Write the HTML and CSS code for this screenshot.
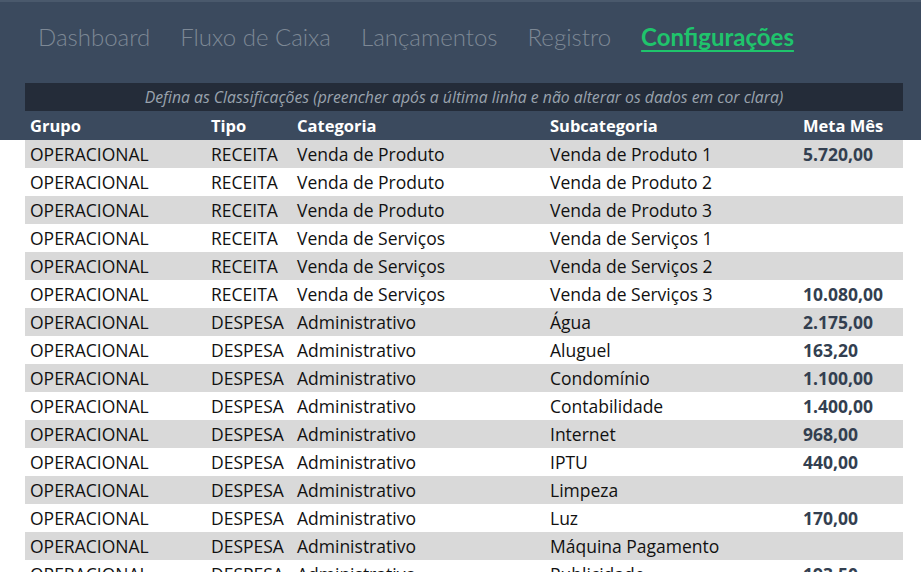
FILE: index.html
```html
<!DOCTYPE html>
<html lang="pt-BR">
<head>
<meta charset="utf-8">
<title>Configurações</title>
<link rel="stylesheet" href="styles.css">
</head>
<body>
<div class="page">
  <header class="top">
    <nav class="nav">
      <a class="nav-item">Dashboard</a>
      <a class="nav-item">Fluxo de Caixa</a>
      <a class="nav-item">Lançamentos</a>
      <a class="nav-item">Registro</a>
      <a class="nav-item active">Configurações</a>
    </nav>
    <div class="banner">Defina as Classificações (preencher após a última linha e não alterar os dados em cor clara)</div>
    <div class="row head">
      <div>Grupo</div><div>Tipo</div><div>Categoria</div><div>Subcategoria</div><div>Meta Mês</div>
    </div>
  </header>
  <main class="table">
    <div class="row odd"><div>OPERACIONAL</div><div>RECEITA</div><div>Venda de Produto</div><div>Venda de Produto 1</div><div class="meta">5.720,00</div></div>
    <div class="row"><div>OPERACIONAL</div><div>RECEITA</div><div>Venda de Produto</div><div>Venda de Produto 2</div><div class="meta"></div></div>
    <div class="row odd"><div>OPERACIONAL</div><div>RECEITA</div><div>Venda de Produto</div><div>Venda de Produto 3</div><div class="meta"></div></div>
    <div class="row"><div>OPERACIONAL</div><div>RECEITA</div><div>Venda de Serviços</div><div>Venda de Serviços 1</div><div class="meta"></div></div>
    <div class="row odd"><div>OPERACIONAL</div><div>RECEITA</div><div>Venda de Serviços</div><div>Venda de Serviços 2</div><div class="meta"></div></div>
    <div class="row"><div>OPERACIONAL</div><div>RECEITA</div><div>Venda de Serviços</div><div>Venda de Serviços 3</div><div class="meta">10.080,00</div></div>
    <div class="row odd"><div>OPERACIONAL</div><div>DESPESA</div><div>Administrativo</div><div>Água</div><div class="meta">2.175,00</div></div>
    <div class="row"><div>OPERACIONAL</div><div>DESPESA</div><div>Administrativo</div><div>Aluguel</div><div class="meta">163,20</div></div>
    <div class="row odd"><div>OPERACIONAL</div><div>DESPESA</div><div>Administrativo</div><div>Condomínio</div><div class="meta">1.100,00</div></div>
    <div class="row"><div>OPERACIONAL</div><div>DESPESA</div><div>Administrativo</div><div>Contabilidade</div><div class="meta">1.400,00</div></div>
    <div class="row odd"><div>OPERACIONAL</div><div>DESPESA</div><div>Administrativo</div><div>Internet</div><div class="meta">968,00</div></div>
    <div class="row"><div>OPERACIONAL</div><div>DESPESA</div><div>Administrativo</div><div>IPTU</div><div class="meta">440,00</div></div>
    <div class="row odd"><div>OPERACIONAL</div><div>DESPESA</div><div>Administrativo</div><div>Limpeza</div><div class="meta"></div></div>
    <div class="row"><div>OPERACIONAL</div><div>DESPESA</div><div>Administrativo</div><div>Luz</div><div class="meta">170,00</div></div>
    <div class="row odd"><div>OPERACIONAL</div><div>DESPESA</div><div>Administrativo</div><div>Máquina Pagamento</div><div class="meta"></div></div>
    <div class="row"><div>OPERACIONAL</div><div>DESPESA</div><div>Administrativo</div><div>Publicidade</div><div class="meta">193,50</div></div>
  </main>
</div>
</body>
</html>
```

FILE: styles.css
```css
* { box-sizing: border-box; }
html, body { margin: 0; padding: 0; }
body {
  background: #ffffff;
  font-family: "Open Sans", Lato, sans-serif;
  width: 921px;
  height: 572px;
  overflow: hidden;
}
.page { width: 921px; }
.top {
  background: #3b4a5e;
  padding: 0 18px 0 25px;
  border-top: 2px solid #4a596c;
}
.nav {
  display: flex;
  gap: 30px;
  height: 81px;
  align-items: flex-start;
  padding: 19px 0 0 13px;
  font-family: Lato, "Open Sans", sans-serif;
}
.nav-item {
  font-size: 24px;
  color: #7d8895;
  font-weight: 300;
  line-height: 32px;
  white-space: nowrap;
}
.nav-item.active {
  color: #1fc46c;
  font-weight: 700;
  text-decoration: underline;
  text-underline-offset: 4px;
}
.banner {
  background: #242c39;
  height: 28px;
  line-height: 28px;
  text-align: center;
  font-style: italic;
  color: #9aa3ae;
  font-size: 15.75px;
}
.row {
  display: grid;
  grid-template-columns: 181px 86px 253px 253px 1fr;
  height: 28px;
  align-items: center;
  font-size: 17.5px;
  white-space: nowrap;
}
.row > div { padding-left: 5px; }
.head {
  color: #ffffff;
  font-weight: 700;
  font-size: 16.5px;
  height: 29px;
}
.table {
  padding: 0 18px 0 25px;
}
.table .row { color: #111111; background: #ffffff; }
.table .row.odd { background: #d9d9d9; }
.meta { font-weight: 700; color: #333f50; }
```
